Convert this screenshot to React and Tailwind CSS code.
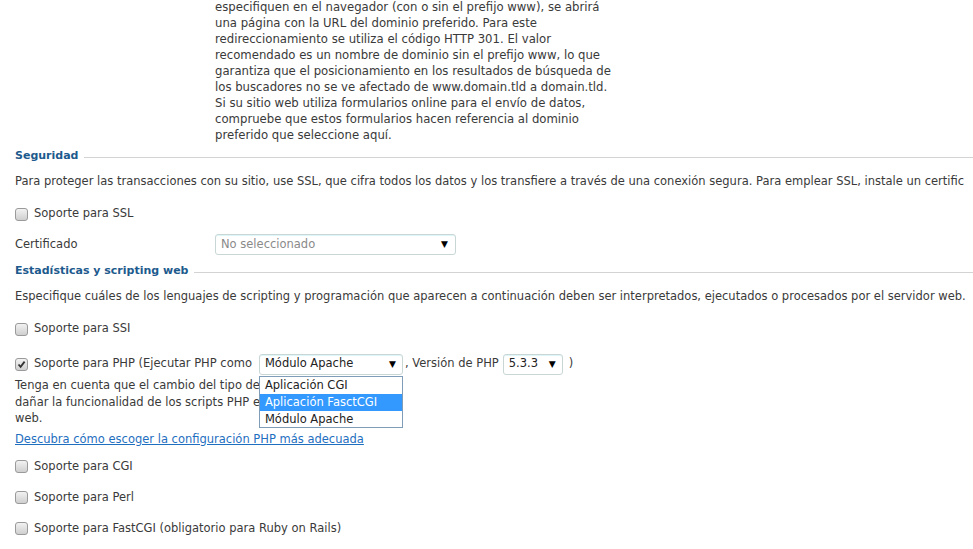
import { useState } from "react";

const topLines = [
    "especifiquen en el navegador (con o sin el prefijo www), se abrirá",
    "una página con la URL del dominio preferido. Para este",
    "redireccionamiento se utiliza el código HTTP 301. El valor",
    "recomendado es un nombre de dominio sin el prefijo www, lo que",
    "garantiza que el posicionamiento en los resultados de búsqueda de",
    "los buscadores no se ve afectado de www.domain.tld a domain.tld.",
    "Si su sitio web utiliza formularios online para el envío de datos,",
    "compruebe que estos formularios hacen referencia al dominio",
    "preferido que seleccione aquí.",
];

const Checkbox = ({ checked }) => (
    <span className="w-[13px] h-[13px] shrink-0 rounded-[3px] border border-[#9a9a9a] bg-gradient-to-b from-[#f2f2f2] to-[#cfcfcf] flex items-center justify-center">
        {checked && (
            <svg width="9" height="9" viewBox="0 0 9 9">
                <path d="M1.5 4.5 L3.6 6.8 L7.6 1.6" fill="none" stroke="#333" strokeWidth="1.8" />
            </svg>
        )}
    </span>
);

const CheckRow = ({ label, checked, className = "" }) => (
    <label className={`flex items-center gap-[6px] h-[18px] pl-[15px] ${className}`}>
        <Checkbox checked={checked} />
        <span>{label}</span>
    </label>
);

const Arrow = () => <span className="text-[9px] text-black leading-none">▼</span>;

const Heading = ({ children, className = "" }) => (
    <div className={`flex items-center h-[18px] pl-[15px] ${className}`}>
        <span className="text-[#1d5a8d] text-[11px] font-bold whitespace-nowrap">{children}</span>
        <span className="flex-1 h-px bg-[#d3d3d3] ml-[6px] mt-[3px]" />
    </div>
);

export default function App() {
    const [ssl, setSsl] = useState(false);

    return (
        <div className="w-[973px] h-[549px] overflow-hidden bg-white text-[#3a3a3a] text-[11.5px] font-['DejaVu_Sans',sans-serif]">
            {/* Texto del dominio preferido */}
            <div className="pl-[215px] -mt-[1px] leading-[16px] text-[11.7px]">
                {topLines.map((l) => (
                    <div key={l} className="whitespace-nowrap">{l}</div>
                ))}
            </div>

            {/* Seguridad */}
            <Heading className="mt-[4px]">Seguridad</Heading>
            <p className="mt-[8px] h-[16px] leading-[16px] pl-[15px] whitespace-nowrap">
                Para proteger las transacciones con su sitio, use SSL, que cifra todos los datos y los transfiere a través de una conexión segura. Para emplear SSL, instale un certific
            </p>
            <CheckRow label="Soporte para SSL" checked={ssl} className="mt-[16px]" />
            <div className="mt-[11px] h-[21px] flex items-center pl-[15px]">
                <span className="w-[200px]">Certificado</span>
                <div
                    onClick={() => setSsl(!ssl)}
                    className="w-[241px] h-[21px] border border-[#c9d6d6] rounded-[3px] flex items-center justify-between pl-[5px] pr-[7px] text-[#8a8a8a] shadow-[inset_0_1px_0_#dff6f8]"
                >
                    <span>No seleccionado</span>
                    <Arrow />
                </div>
            </div>

            {/* Estadisticas y scripting */}
            <Heading className="mt-[7px]">Estadísticas y scripting web</Heading>
            <p className="mt-[8px] h-[16px] leading-[16px] pl-[15px] whitespace-nowrap">
                Especifique cuáles de los lenguajes de scripting y programación que aparecen a continuación deben ser interpretados, ejecutados o procesados por el servidor web.
            </p>
            <CheckRow label="Soporte para SSI" className="mt-[16px]" />

            <div className="mt-[15px] h-[22px] flex items-center pl-[15px] whitespace-nowrap">
                <Checkbox checked />
                <span className="ml-[6px]">Soporte para PHP (Ejecutar PHP como</span>
                <div className="relative ml-[7px]">
                    <div className="w-[144px] h-[21px] border border-[#c9d6d6] rounded-[3px] flex items-center justify-between pl-[5px] pr-[6px] text-[#222] shadow-[inset_0_1px_0_#dff6f8]">
                        <span>Módulo Apache</span>
                        <Arrow />
                    </div>
                    <ul className="absolute left-0 top-[22px] w-[144px] bg-white border border-[#7f9db9] z-10 text-[#222]">
                        <li className="h-[17px] leading-[17px] px-[5px]">Aplicación CGI</li>
                        <li className="h-[17px] leading-[17px] px-[5px] bg-[#3399ff] text-white">Aplicación FasctCGI</li>
                        <li className="h-[16px] leading-[16px] px-[5px]">Módulo Apache</li>
                    </ul>
                </div>
                <span className="ml-[2px]">, Versión de PHP</span>
                <div className="ml-[4px] w-[60px] h-[21px] border border-[#c9d6d6] rounded-[3px] flex items-center justify-between pl-[5px] pr-[6px] text-[#222] shadow-[inset_0_1px_0_#dff6f8]">
                    <span>5.3.3</span>
                    <Arrow />
                </div>
                <span className="ml-[6px]">)</span>
            </div>

            <p className="mt-[2px] pl-[15px] w-[420px] leading-[16.5px]">
                Tenga en cuenta que el cambio del tipo de controlador PHP puede
                <br />
                dañar la funcionalidad de los scripts PHP existentes en su sitio
                <br />
                web.
            </p>
            <a href="#" className="block mt-[4px] h-[16px] leading-[16px] ml-[15px] w-fit text-[#1f6fc0] underline">
                Descubra cómo escoger la configuración PHP más adecuada
            </a>

            <CheckRow label="Soporte para CGI" className="mt-[11px]" />
            <CheckRow label="Soporte para Perl" className="mt-[13px]" />
            <CheckRow label="Soporte para FastCGI (obligatorio para Ruby on Rails)" className="mt-[13px]" />
        </div>
    );
}
